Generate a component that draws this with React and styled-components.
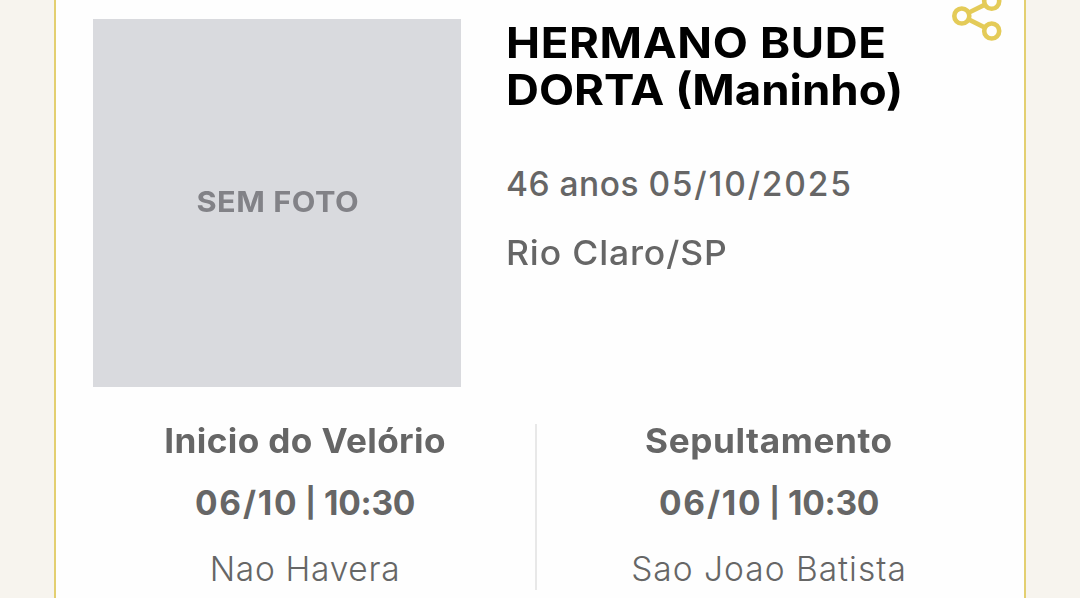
import styled, { createGlobalStyle } from 'styled-components';

const services = [
  {
    title: 'Inicio do Velório',
    titleTrack: 0.35,
    day: '06/10',
    hour: '10:30',
    place: 'Nao Havera',
    placeTrack: 0.7,
  },
  {
    title: 'Sepultamento',
    titleTrack: 0.55,
    day: '06/10',
    hour: '10:30',
    place: 'Sao Joao Batista',
    placeTrack: 1,
  },
];

function ShareIcon() {
  return (
    <svg width="52" height="44" viewBox="950 0 52 44" fill="none" stroke="#e4cb58" strokeWidth="4.6">
      <path d="M968.5 12.8L985 4.6M968.5 19.4L985 27.6" />
      <circle cx="961.8" cy="16" r="7.5" />
      <circle cx="991.7" cy="1.2" r="7.5" />
      <circle cx="991.7" cy="31" r="7.5" />
    </svg>
  );
}

function App() {
  return (
    <Page>
      <GlobalStyle />
      <Card>
        <Person>
          <Photo>
            <NoPhoto>SEM FOTO</NoPhoto>
          </Photo>
          <Info>
            <Name>
              <Wide $stretch={1.07} $track={0.6}>HERMANO BUDE</Wide>
              <Wide $stretch={1.07}>DORTA (Maninho)</Wide>
            </Name>
            <Detail>
              <Tracked $track={0.5}>46 anos </Tracked>
              <Tracked $track={1.8}>05/10/2025</Tracked>
            </Detail>
            <Detail>
              <Wide $stretch={1.06} $track={0.8}>Rio Claro/SP</Wide>
            </Detail>
          </Info>
          <Share aria-label="Compartilhar">
            <ShareIcon />
          </Share>
        </Person>
        <Services>
          {services.map((service) => (
            <Service key={service.place}>
              <Title $track={service.titleTrack}>{service.title}</Title>
              <Time>
                <Tracked $track={1.8}>{service.day}</Tracked>
                <Bar>|</Bar>
                <Tracked $track={-0.3}>{service.hour}</Tracked>
              </Time>
              <Place $track={service.placeTrack}>{service.place}</Place>
            </Service>
          ))}
        </Services>
      </Card>
    </Page>
  );
}

const GlobalStyle = createGlobalStyle`
*{
  box-sizing:border-box;
}
body{
  margin:0;
  background-color:#f7f4ee;
  font-family:Inter, "Open Sans", sans-serif;
  color:#666;
}
`
const Page = styled.main`
height:598px;
overflow:hidden;
display:flex;
justify-content:center;
`
const Card = styled.article`
width:972px;
height:598px;
background-color:#fefefe;
border:solid #e3cf70;
border-width:0 2px;
`
const Person = styled.div`
display:flex;
align-items:flex-start;
padding-left:37px;
height:424px;
`
const Photo = styled.div`
width:368px;
height:368px;
margin-top:19px;
padding:0 0 4px 1px;
background-color:#d9dade;
display:flex;
align-items:center;
justify-content:center;
flex-shrink:0;
`
const NoPhoto = styled.span`
color:#828287;
font-size:29px;
font-weight:700;
letter-spacing:0.5px;
transform:scaleX(1.06);
filter:blur(0.6px);
`
const Info = styled.div`
width:477px;
padding:19px 0 0 45px;
white-space:nowrap;
`
const Name = styled.h1`
margin:0 0 51px;
font-size:42.6px;
line-height:47px;
font-weight:700;
color:#000;
`
const Wide = styled.span`
display:block;
width:max-content;
letter-spacing:${(props) => props.$track || 0}px;
transform:scaleX(${(props) => props.$stretch});
transform-origin:left;
`
const Tracked = styled.span`
letter-spacing:${(props) => props.$track}px;
`
const Detail = styled.p`
margin:0 0 29px;
font-size:33.5px;
line-height:40px;
font-weight:500;
`
const Share = styled.button`
margin:0 0 0 12px;
padding:0;
border:0;
background:none;
cursor:pointer;
svg{
  display:block;
}
`
const Services = styled.div`
display:grid;
grid-template-columns:462px 464px;
padding-left:19px;
`
const Service = styled.section`
height:166px;
display:flex;
flex-direction:column;
align-items:center;
white-space:nowrap;
font-size:33.5px;
line-height:40px;
&:first-child{
  border-right:2px solid #e8e8e8;
}
`
const Title = styled.h2`
margin:-3px 0 22px;
font-size:inherit;
font-weight:700;
letter-spacing:${(props) => props.$track}px;
transform:scaleX(1.05);
`
const Time = styled.p`
display:flex;
margin:0 0 26px;
font-weight:700;
`
const Bar = styled.span`
margin:0 8px 0 7px;
font-size:29px;
`
const Place = styled.p`
margin:0;
font-weight:300;
letter-spacing:${(props) => props.$track}px;
`

export default App
